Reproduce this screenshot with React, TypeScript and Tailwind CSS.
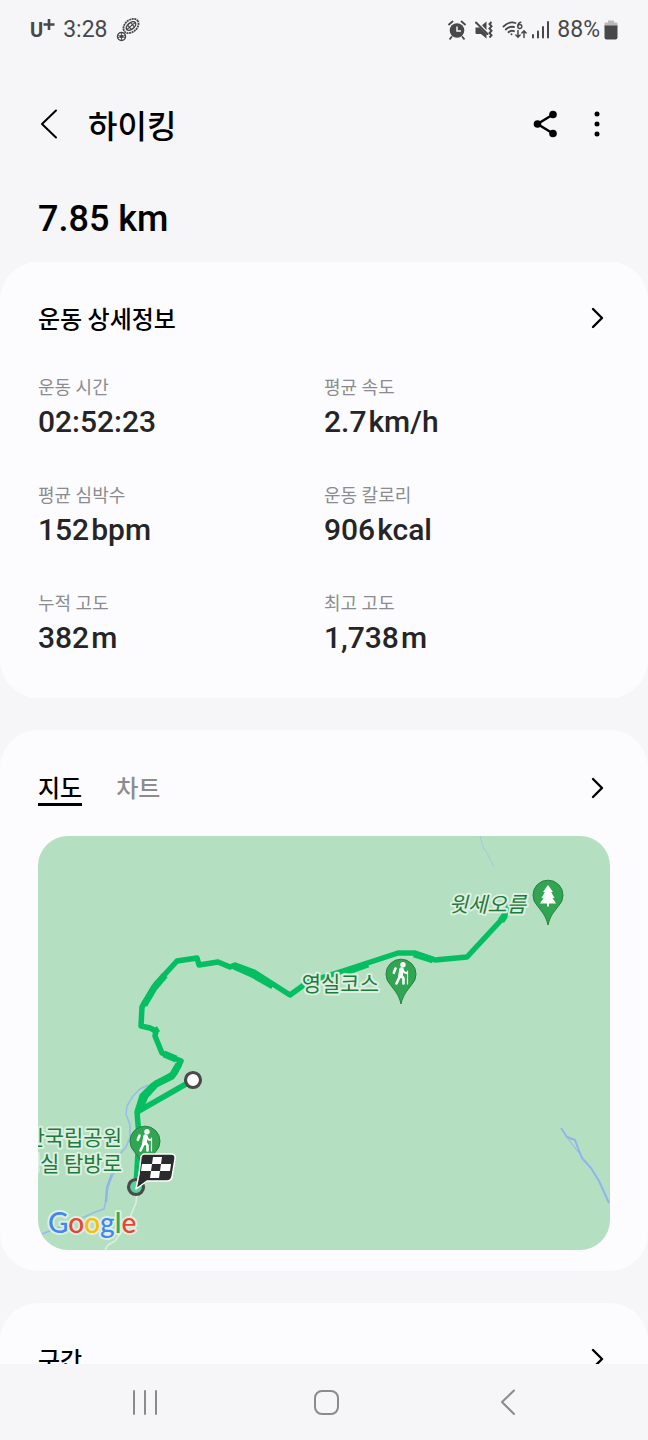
import type { ReactNode } from "react"
import { useState } from "react"

const stats = [
  { label: "운동 시간", value: "02:52:23", unit: "" },
  { label: "평균 속도", value: "2.7", unit: "km/h" },
  { label: "평균 심박수", value: "152", unit: "bpm" },
  { label: "운동 칼로리", value: "906", unit: "kcal" },
  { label: "누적 고도", value: "382", unit: "m" },
  { label: "최고 고도", value: "1,738", unit: "m" },
]

const tabs = ["지도", "차트"]

function Card({ children, className = "" }: { children: ReactNode; className?: string }) {
  return <section className={`rounded-[38px] bg-[#fcfcfe] px-[38px] ${className}`}>{children}</section>
}

function CardTitle({ children }: { children: ReactNode }) {
  return <h2 className="font-['Noto_Sans_CJK_KR',sans-serif] text-2xl leading-8 font-medium">{children}</h2>
}

function MoreButton({ label }: { label: string }) {
  return (
    <button aria-label={label} className="-mr-1 flex size-8 items-center justify-center">
      <svg width="32" height="32" viewBox="0 0 32 32" fill="none" stroke="#000" strokeWidth="2.4" strokeLinecap="round" strokeLinejoin="round">
        <path d="M11 7L20 16L11 25" />
      </svg>
    </button>
  )
}

function StatusBar() {
  return (
    <div className="flex h-[60px] shrink-0 items-center justify-between px-[30px] text-[23px] text-[#484848]">
      <div className="flex items-center gap-2">
        <span className="flex items-start text-xl leading-6 font-bold">
          U
          <svg width="12" height="14" viewBox="0 0 12 14" stroke="currentColor" strokeWidth="2.6">
            <path d="M6 1v11M0.5 6.5h11" />
          </svg>
        </span>
        <span>3:28</span>
        <svg width="24" height="24" viewBox="0 0 24 24" fill="none" stroke="currentColor">
          <g transform="rotate(-40 15 8)">
            <ellipse cx="15" cy="8" rx="8.5" ry="6" strokeWidth="1.8" strokeDasharray="2 0.6" />
            <ellipse cx="15" cy="8" rx="5.5" ry="3.2" strokeWidth="1.6" />
            <path d="M9 8h12M13 5.5v5M17 5.5v5" strokeWidth="1.2" />
          </g>
          <circle cx="5.5" cy="18.5" r="4" strokeWidth="1.5" />
          <circle cx="5.5" cy="18.5" r="1.4" fill="currentColor" />
          <path d="M5.5 14.5v8M1.8 17.2l7.4 2.6M1.8 19.8l7.4-2.6" strokeWidth="0.8" />
        </svg>
      </div>
      <div className="flex items-center gap-2">
        <svg width="18" height="20" viewBox="0 0 18 20" fill="currentColor">
          <circle cx="9" cy="10.5" r="7.3" />
          <path d="M1 4.5L4.5 1.5M17 4.5L13.5 1.5M3.5 17L2 18.8M14.5 17L16 18.8" stroke="currentColor" strokeWidth="1.8" strokeLinecap="round" />
          <path d="M9 6.5v4.6h4" fill="none" stroke="#f6f6f8" strokeWidth="1.5" />
        </svg>
        <svg width="20" height="20" viewBox="0 0 20 20" fill="currentColor">
          <path d="M1.5 7.5h4.2l6.8 6.8V18.500L7 14H2.5Q1.5 14 1.5 13ZM12.5 1.5v8.500L8 5.3Z" />
          <path d="M2 2.500L13.500 14" stroke="currentColor" strokeWidth="2" strokeLinecap="round" />
          <path d="M17.5 2l-2 2 2 2.3-2 2.3 2 2.2-2 2.3 2 2.2-2 2.2" fill="none" stroke="currentColor" strokeWidth="2" />
        </svg>
        <div className="flex items-center gap-1">
          <svg width="25" height="20" viewBox="0 0 25 20" fill="none" stroke="currentColor" strokeWidth="1.8" strokeLinecap="round">
            <path d="M1.5 6.5Q7 1 13.5 3M3.8 9.5Q7.5 6 12 7M6.5 12.2Q9 10 12 11.2" />
            <circle cx="9.5" cy="14.3" r="1" fill="currentColor" stroke="none" />
            <circle cx="17.8" cy="6.5" r="2" strokeWidth="1.4" />
            <path d="M15.8 6Q16 2.8 18.8 2.2" strokeWidth="1.4" />
            <path d="M16 10.5v6.5M13.9 15l2.1 2.2L18.1 15M22 17.5V11M19.9 13L22 10.8l2.1 2.2" strokeWidth="1.5" />
          </svg>
          <svg width="18" height="20" viewBox="0 0 18 20" stroke="currentColor" strokeWidth="2" strokeLinecap="round">
            <path d="M2 15v2.500M7 11.5V17.500M12 7v10.500M17 2v15.500" />
          </svg>
        </div>
        <div className="flex items-center gap-1">
          <span>88%</span>
          <svg width="14" height="20" viewBox="0 0 14 20">
            <path d="M4 0.5h6v2h2.5q1 0 1 1V7H0.500V3.500q0-1 1-1H4Z" fill="#b9b9bb" />
            <path d="M0.5 5.500h13V17.500q0 2-2 2h-9q-2 0-2-2Z" fill="#484848" />
          </svg>
        </div>
      </div>
    </div>
  )
}

function Pin({ x, y, children }: { x: number; y: number; children: ReactNode }) {
  return (
    <g transform={`translate(${x} ${y})`}>
      <path d="M0 30C-2 21-6 17-10.600 10.800A15 15 0 1 1 10.600 10.800C6 17 2 21 0 30Z" fill="#31a551" stroke="#278142" strokeWidth="1" />
      {children}
    </g>
  )
}

function Hiker() {
  return (
    <g stroke="#fff" fill="none" strokeLinecap="round" strokeLinejoin="round">
      <circle cx="2" cy="-9.300" r="2.700" fill="#fff" stroke="none" />
      <path d="M-5.500-5.500L-7.200-1.200" strokeWidth="2.600" />
      <path d="M0.500-4.500L-0.500 2" strokeWidth="4.600" />
      <path d="M-1 2L-4.500 9.500M0.500 1.500L2.500 4.500V9.500" strokeWidth="2.600" />
      <path d="M1.500-4.500L3.500-1.500L6-1" strokeWidth="1.800" />
      <path d="M6.500-3V10" strokeWidth="1.200" />
    </g>
  )
}

function RouteMap() {
  return (
    <svg viewBox="0 0 572 414" className="block w-full rounded-[30px] bg-[#b4dfc0]" role="img" aria-label="지도">
      {/* streams and footpath */}
      <g fill="none" strokeLinejoin="round">
        <path d="M442 0L445 11L449 17L453 25L456 31" stroke="#a3c6e3" strokeWidth="1" />
        <path d="M523 292L529 301L537 304L541 315L544 322L553 332L561 345L571 367" stroke="#90b5ee" strokeWidth="2" />
        <path d="M528 300L534 308L541 317" stroke="#90b5ee" strokeWidth="1" />
        <path d="M110 249L102 253L95 260L89 270L88 278L92 289L92 301L88 311L81 319L77 334L70 349L68 364L66 373L57 376L42 383L22 391L4 398" stroke="#96bcea" strokeWidth="1.500" />
        <path d="M74 338L69 352L68 366" stroke="#90b5ee" strokeWidth="2.500" />
        <path d="M99 358L98 367L93 379L89 388L82 398L77 405L70 409L67 414" stroke="#e0eee0" strokeWidth="1.500" />
      </g>

      {/* recorded route */}
      <g fill="none" stroke="#06be62" strokeWidth="5.500" strokeLinejoin="round">
        <path d="M155 244L99 276" />
        <path d="M98 350L101 300L99 276L104 260L114 250L137 237L143 225L124 217L117 200L118 195L112 192L103 190L104 171L118 148L139 125L159 122L161 129L180 126L192 131L197 129L216 136L252 159L270 146L308 134L360 117L377 117L397 124L429 121L466 81L472 68" />
        <path d="M101 274L107 260L118 248L134 240L141 228M138 223L126 218M119 197L116 192M106 169L116 152L127 139M196 130L214 138L235 150M308 136L330 128M376 118L395 124M463 85L467 79" strokeWidth="7" />
      </g>

      <Pin x={510} y={59}>
        <path d="M0-10L5-3H3.200L6.500 3H4.500L8 8.500H1V11.500H-1V8.500H-8L-4.500 3H-6.500L-3.200-3H-5Z" fill="#fff" />
      </Pin>
      <Pin x={363} y={138}>
        <Hiker />
      </Pin>
      <Pin x={107} y={305}>
        <Hiker />
      </Pin>

      <g
        className="font-['Noto_Sans_CJK_KR',sans-serif] text-[21px]"
        fill="#1f7a3d"
        stroke="#dcf0e0"
        strokeWidth="4"
        strokeLinejoin="round"
        paintOrder="stroke"
        textAnchor="end"
      >
        <text x="488" y="76" fontStyle="italic">윗세오름</text>
        <text x="341" y="155">영실코스</text>
        <text x="84" y="309">한라산국립공원</text>
        <text x="84" y="335">영실 탐방로</text>
      </g>

      {/* start and finish */}
      <circle cx="155" cy="244" r="7.500" fill="#fff" stroke="#4a4a4a" strokeWidth="3.200" />
      <circle cx="98" cy="351" r="7.500" fill="#5ed0a0" stroke="#4a4a4a" strokeWidth="3.200" />
      <path d="M106 318H133Q138 318 137 323L134 341Q133 345 129 345H109L98 353L101 338L103 321Q104 318 106 318Z" fill="#2b2b2d" stroke="#fff" strokeWidth="1.500" strokeLinejoin="round" />
      <path d="M115 321H124L123 328H133L132 335H122L121 342H112L113 335H103L104 328H114ZM114 328L113 335H122L123 328Z" fill="#fff" fillRule="evenodd" />

      <text x="10" y="397" className="font-['Lato',sans-serif] text-[28px] font-medium" stroke="#dcf0e0" strokeWidth="4" strokeLinejoin="round" paintOrder="stroke">
        <tspan fill="#4285f4">G</tspan>
        <tspan fill="#ea4335">o</tspan>
        <tspan fill="#fbbc05">o</tspan>
        <tspan fill="#4285f4">g</tspan>
        <tspan fill="#34a853">l</tspan>
        <tspan fill="#ea4335">e</tspan>
      </text>
    </svg>
  )
}

export default function App() {
  const [tab, setTab] = useState("지도")

  return (
    <div className="flex h-screen flex-col bg-[#f6f6f8] font-['Roboto','Noto_Sans_CJK_KR',sans-serif] text-black">
      <StatusBar />

      <header className="flex h-32 shrink-0 items-center pr-[35px] pl-8">
        <button aria-label="뒤로" className="flex size-8 items-center justify-center">
          <svg width="32" height="32" viewBox="0 0 32 32" fill="none" stroke="#000" strokeWidth="2" strokeLinecap="round" strokeLinejoin="round">
            <path d="M24 2.500L10 16L24 29.500" />
          </svg>
        </button>
        <h1 className="ml-6 flex-1 font-['Noto_Sans_CJK_KR',sans-serif] text-[32px] leading-10 font-medium">하이킹</h1>
        <button aria-label="공유" className="flex size-8 items-center justify-center">
          <svg width="32" height="32" viewBox="0 0 32 32" fill="#000">
            <path d="M24 6.500L8.500 16L24 25.500" fill="none" stroke="#000" strokeWidth="2.400" />
            <circle cx="24" cy="6.500" r="3.800" />
            <circle cx="8.500" cy="16" r="3.800" />
            <circle cx="24" cy="25.500" r="3.800" />
          </svg>
        </button>
        <button aria-label="더보기" className="ml-5 flex size-8 items-center justify-center">
          <svg width="32" height="32" viewBox="0 0 32 32" fill="#000">
            <circle cx="16" cy="6" r="2.500" />
            <circle cx="16" cy="16" r="2.500" />
            <circle cx="16" cy="26" r="2.500" />
          </svg>
        </button>
      </header>

      <main className="min-h-0 flex-1 overflow-hidden">
        <p className="px-[38px] pt-2 pb-5 text-4xl leading-[46px] font-medium">7.85 km</p>

        <div className="flex flex-col gap-8">
          <Card className="pt-10 pb-10">
            <div className="flex items-center justify-between">
              <CardTitle>운동 상세정보</CardTitle>
              <MoreButton label="운동 상세정보 더보기" />
            </div>
            <dl className="mt-10 grid grid-cols-2 gap-y-10">
              {stats.map((s) => (
                <div key={s.label}>
                  <dt className="text-lg leading-7 text-[#8c8c8e]">{s.label}</dt>
                  <dd className="flex gap-0.5 text-3xl leading-10 font-medium text-[#252527]">
                    {s.value}
                    {s.unit && <span>{s.unit}</span>}
                  </dd>
                </div>
              ))}
            </dl>
          </Card>

          <Card className="pt-10 pb-[21px]">
            <div className="flex items-center justify-between">
              <div role="tablist" className="flex gap-[34px] font-['Noto_Sans_CJK_KR',sans-serif]">
                {tabs.map((t) => (
                  <button
                    key={t}
                    role="tab"
                    aria-selected={tab === t}
                    onClick={() => setTab(t)}
                    className={`border-b-3 text-2xl leading-[33px] font-medium ${tab === t ? "border-black" : "border-transparent text-[#8c8c8e]"}`}
                  >
                    {t}
                  </button>
                ))}
              </div>
              <MoreButton label="지도 더보기" />
            </div>
            <div className="mt-[30px]">
              <RouteMap />
            </div>
          </Card>

          <Card className="pt-10 pb-10">
            <div className="flex items-center justify-between">
              <CardTitle>구간</CardTitle>
              <MoreButton label="구간 더보기" />
            </div>
          </Card>
        </div>
      </main>

      <nav className="flex h-[76px] shrink-0 items-center justify-around bg-[#f6f6f8] pr-12 pl-[54px]">
        <button aria-label="최근 앱" className="flex size-8 items-center justify-center">
          <svg width="32" height="32" viewBox="0 0 32 32" stroke="#8b8b8d" strokeWidth="2" strokeLinecap="round">
            <path d="M5 5v23M16 5v23M27 5v23" />
          </svg>
        </button>
        <button aria-label="홈" className="flex size-8 items-center justify-center">
          <svg width="32" height="32" viewBox="0 0 32 32" fill="none" stroke="#8b8b8d" strokeWidth="2">
            <rect x="4" y="5" width="23" height="23" rx="7" />
          </svg>
        </button>
        <button aria-label="이전" className="flex size-8 items-center justify-center">
          <svg width="32" height="32" viewBox="0 0 32 32" fill="none" stroke="#8b8b8d" strokeWidth="2" strokeLinecap="round" strokeLinejoin="round">
            <path d="M21 4.500L9 16L21 28" />
          </svg>
        </button>
      </nav>
    </div>
  )
}
